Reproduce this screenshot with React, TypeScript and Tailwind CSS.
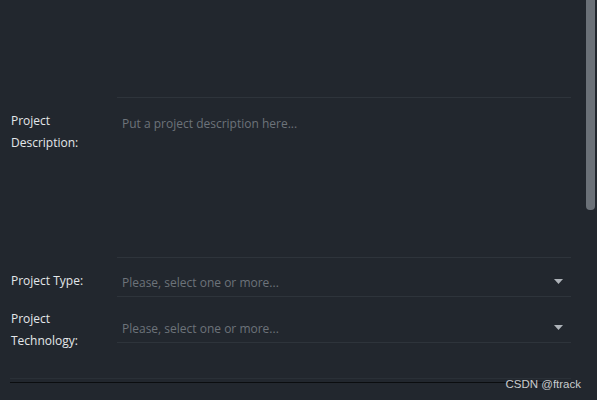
import React from 'react';

function Caret() {
  return (
    <svg width="9" height="5" viewBox="0 0 9 5" className="shrink-0">
      <path d="M0 0 L9 0 L4.5 5 Z" fill="#aeb3b9" />
    </svg>
  );
}

export default function App() {
  return (
    <div
      className="relative w-[597px] h-[400px] overflow-hidden bg-[#22272e] text-[12px]"
      style={{ fontFamily: '"Open Sans", "Noto Sans", sans-serif' }}
    >
      <div className="pt-[97px] pr-[26px]">
        {/* description */}
        <div className="flex">
          <div className="w-[117px] shrink-0 pl-[11px] pt-[13px] leading-[22px] text-[#e4e7ea]">
            Project
            <br />
            Description:
          </div>
          <div className="flex-1 h-[161px] border-t border-b border-[#2e343b] pl-[5px] pt-[17px] leading-[18px] text-[#6d737a]">
            Put a project description here...
          </div>
        </div>

        {/* type */}
        <div className="flex">
          <div className="w-[117px] shrink-0 pl-[11px] pt-[12px] leading-[22px] text-[#e4e7ea]">
            Project Type:
          </div>
          <div className="flex-1 h-[39px] border-b border-[#2e343b] pl-[5px] pr-[8px] pt-[16px] flex items-start justify-between leading-[18px] text-[#6d737a]">
            <span>Please, select one or more...</span>
            <span className="pt-[5px]">
              <Caret />
            </span>
          </div>
        </div>

        {/* technology */}
        <div className="flex">
          <div className="w-[117px] shrink-0 pl-[11px] pt-[11px] leading-[22px] text-[#e4e7ea] h-[46px]">
            Project
            <br />
            Technology:
          </div>
          <div className="flex-1 h-[46px] border-b border-[#2e343b] pl-[5px] pr-[8px] pt-[23px] flex items-start justify-between leading-[18px] text-[#6d737a]">
            <span>Please, select one or more...</span>
            <span className="pt-[5px]">
              <Caret />
            </span>
          </div>
        </div>

        <div className="ml-[10px] mt-[35px] border-t border-[#2a3037]" />
        <div className="ml-[10px] mt-[3px] border-t border-[#0b0d0f]" />
      </div>

      {/* scrollbar */}
      <div className="absolute top-0 right-[2px] w-[9px] h-[210px] rounded-b-[4px] bg-[#6b7178]" />

      {/* watermark */}
      <div
        className="absolute right-[16px] top-[377px] text-[11.5px] leading-[14px] text-[#c9cbcd]"
        style={{ fontFamily: '"Liberation Sans", sans-serif' }}
      >
        CSDN @ftrack
      </div>
    </div>
  );
}
